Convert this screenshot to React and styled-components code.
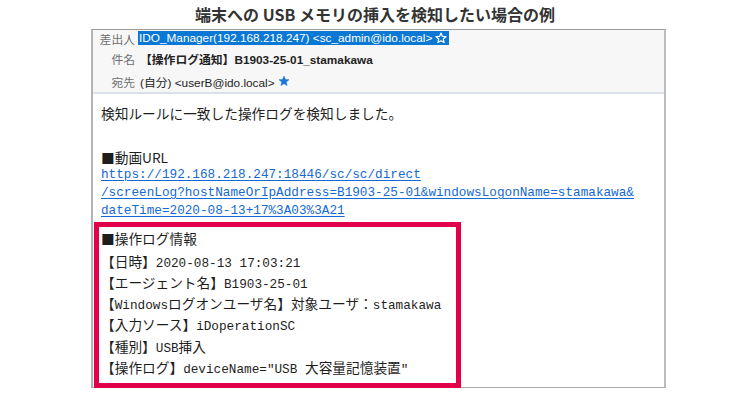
import React from "react";
import styled, { createGlobalStyle } from "styled-components";

const Global = createGlobalStyle`
  html, body { margin: 0; padding: 0; background: #ffffff; }
  body { font-family: "Noto Sans CJK JP", sans-serif; color: #222; }
`;

const Page = styled.div`
  width: 750px;
  height: 398px;
  overflow: hidden;
`;

const Title = styled.h1`
  margin: 0;
  height: 29px;
  line-height: 29px;
  text-align: center;
  font-size: 16px;
  font-weight: 700;
  color: #333;
  font-family: "Noto Sans CJK JP", sans-serif;
`;

const Frame = styled.div`
  margin-left: 91px;
  width: 575px;
  box-sizing: border-box;
  border-top: 1px solid #9c9c9c;
  border-left: 2px solid #b4b4b4;
  border-right: 2px solid #bdbdbd;
  border-bottom: 1px solid #a8a8a8;
`;

const Header = styled.div`
  background: #f7f7f7;
  border-bottom: 2px solid #dbe1e9;
  display: grid;
  grid-template-columns: 42px 1fr;
  column-gap: 5px;
  font-family: "Liberation Sans", "Noto Sans CJK JP", sans-serif;
  font-size: 11.8px;
`;

const Label = styled.div`
  height: ${(p) => p.$h}px;
  display: flex;
  align-items: center;
  justify-content: flex-end;
  color: #6f6f6f;
`;

const Value = styled.div`
  height: ${(p) => p.$h}px;
  display: flex;
  align-items: center;
  gap: 3px;
  color: #222;
  font-weight: ${(p) => (p.$bold ? 700 : 400)};
`;

const Selected = styled.span`
  display: inline-flex;
  align-items: center;
  gap: 3px;
  height: 14px;
  line-height: 14px;
  padding: 0 2px 0 1px;
  margin-left: -2px;
  background: #0a78d4;
  color: #fff;
`;

const Body = styled.div`
  padding: 8px 0 0 8px;
  font-size: 13.7px;
  color: #1e1e1e;
`;

const Para = styled.p`
  margin: 0 0 ${(p) => p.$mb || 0}px 0;
  line-height: ${(p) => p.$lh || 22}px;
  height: ${(p) => p.$lh || 22}px;
`;

const Link = styled.a`
  display: block;
  font-family: "Liberation Mono", monospace;
  font-size: 12.7px;
  line-height: 18px;
  color: #1469d2;
  text-decoration: underline;
  text-underline-offset: 2px;
  margin-bottom: 2px;
`;

const Box = styled.div`
  margin-left: -7px;
  width: 367px;
  box-sizing: border-box;
  border: 5px solid #e3004b;
  padding: 1px 0 0 2px;
  height: 166px;
  margin-bottom: -1px;
`;

const BoxHead = styled.div`
  height: 21px;
  line-height: 21px;
  margin-bottom: 1.5px;
`;

const BoxLine = styled.div`
  height: 21.3px;
  line-height: 21.3px;
  white-space: nowrap;
`;

const Code = styled.span`
  font-family: "Liberation Mono", monospace;
  font-size: 12.7px;
  line-height: 1;
`;

const Star = ({ filled, color }) => (
  <svg width="12" height="12" viewBox="0 0 24 24" aria-hidden="true">
    <path
      d="M12 2.2l2.9 6.6 7.1.6-5.4 4.7 1.6 7-6.2-3.7-6.2 3.7 1.6-7L2 9.4l7.1-.6z"
      fill={filled ? color : "none"}
      stroke={color}
      strokeWidth={filled ? 1 : 2.4}
      strokeLinejoin="round"
    />
  </svg>
);

export default function App() {
  return (
    <Page>
      <Global />
      <Title>端末への USB メモリの挿入を検知したい場合の例</Title>
      <Frame>
        <Header>
          <Label $h={16}>差出人</Label>
          <Value $h={16}>
            <Selected>
              IDO_Manager(192.168.218.247) &lt;sc_admin@ido.local&gt;
              <Star color="#ffffff" />
            </Selected>
          </Value>
          <Label $h={24}>件名</Label>
          <Value $h={24} $bold>【操作ログ通知】B1903-25-01_stamakawa</Value>
          <Label $h={22}>宛先</Label>
          <Value $h={22}>
            (自分) &lt;userB@ido.local&gt;
            <Star filled color="#1976d8" />
          </Value>
        </Header>
        <Body>
          <Para $mb={24}>検知ルールに一致した操作ログを検知しました。</Para>
          <Para $lh={18}>■動画URL</Para>
          <Link href="#">
            https://192.168.218.247:18446/sc/sc/direct
            <br />
            /screenLog?hostNameOrIpAddress=B1903-25-01&amp;windowsLogonName=stamakawa&amp;
            <br />
            dateTime=2020-08-13+17%3A03%3A21
          </Link>
          <Box>
            <BoxHead>■操作ログ情報</BoxHead>
            <BoxLine>【日時】<Code>2020-08-13 17:03:21</Code></BoxLine>
            <BoxLine>【エージェント名】<Code>B1903-25-01</Code></BoxLine>
            <BoxLine>
              【<Code>Windows</Code>ログオンユーザ名】対象ユーザ：<Code>stamakawa</Code>
            </BoxLine>
            <BoxLine>【入力ソース】<Code>iDoperationSC</Code></BoxLine>
            <BoxLine>【種別】<Code>USB</Code>挿入</BoxLine>
            <BoxLine>
              【操作ログ】<Code>deviceName="USB </Code>大容量記憶装置<Code>"</Code>
            </BoxLine>
          </Box>
        </Body>
      </Frame>
    </Page>
  );
}
